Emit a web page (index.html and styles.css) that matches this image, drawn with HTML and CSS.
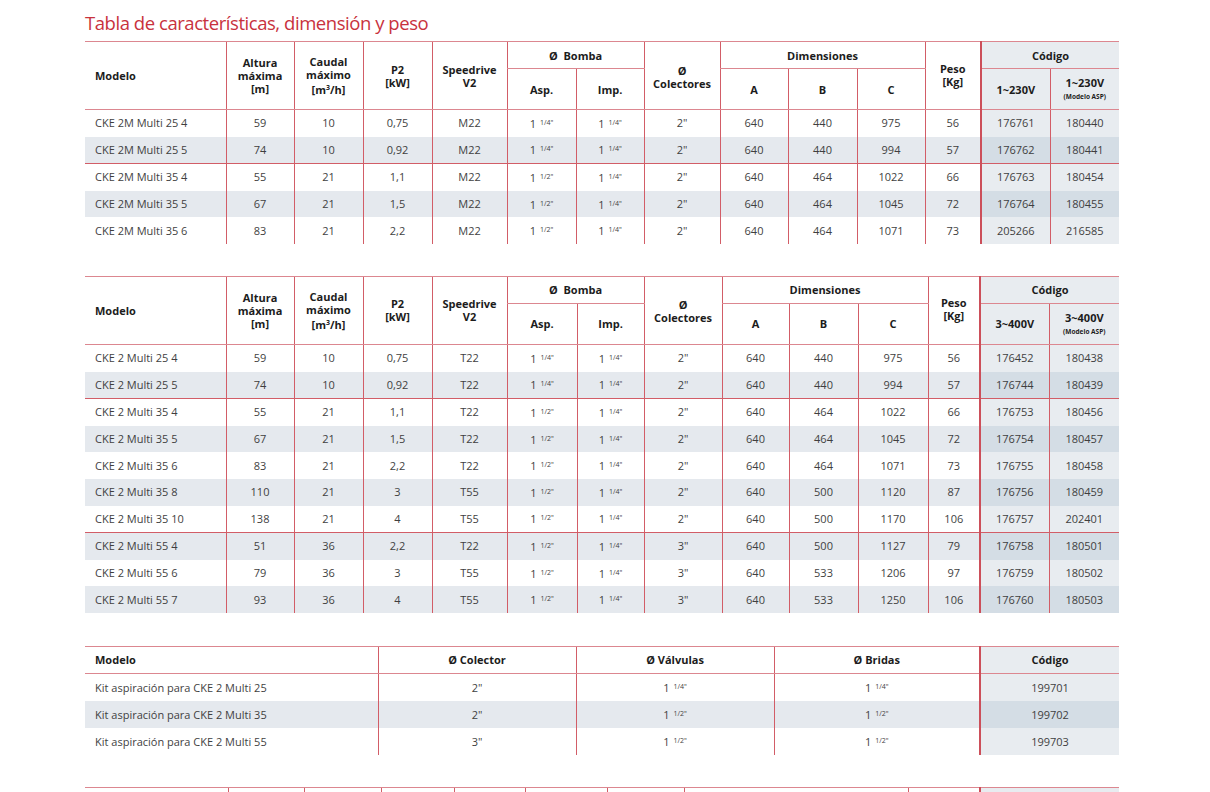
FILE: index.html
```html
<!DOCTYPE html>
<html lang="es">
<head>
<meta charset="utf-8">
<title>Tabla de características, dimensión y peso</title>
<link rel="stylesheet" href="styles.css">
</head>
<body>
<main class="page">
  <h1 class="title">Tabla de características, dimensión y peso</h1>

  <table class="spec t1">
    <colgroup>
      <col><col><col><col><col><col><col><col><col><col><col><col><col><col>
    </colgroup>
    <thead>
      <tr class="r1">
        <th rowspan="2" class="m">Modelo</th>
        <th rowspan="2">Altura<br>máxima<br>[m]</th>
        <th rowspan="2">Caudal<br>máximo<br><span class="unit">[m<sup>3</sup>/h]</span></th>
        <th rowspan="2">P2<br>[kW]</th>
        <th rowspan="2">Speedrive<br>V2</th>
        <th colspan="2">Ø&nbsp;&nbsp;Bomba</th>
        <th rowspan="2" class="col">Ø<br>Colectores</th>
        <th colspan="3">Dimensiones</th>
        <th rowspan="2" class="peso">Peso<br>[Kg]</th>
        <th colspan="2" class="code first">Código</th>
      </tr>
      <tr class="r2">
        <th>Asp.</th>
        <th>Imp.</th>
        <th>A</th>
        <th>B</th>
        <th>C</th>
        <th class="code first">1~230V</th>
        <th class="code asp">1~230V<small>(Modelo ASP)</small></th>
      </tr>
    </thead>
    <tbody>
      <tr>
        <td class="m">CKE 2M Multi 25 4</td><td>59</td><td>10</td><td>0,75</td><td>M22</td>
        <td>1 <span class="fr">1/4"</span></td><td>1 <span class="fr">1/4"</span></td><td>2"</td>
        <td>640</td><td>440</td><td>975</td><td>56</td><td class="code first">176761</td><td class="code">180440</td>
      </tr>
      <tr class="alt">
        <td class="m">CKE 2M Multi 25 5</td><td>74</td><td>10</td><td>0,92</td><td>M22</td>
        <td>1 <span class="fr">1/4"</span></td><td>1 <span class="fr">1/4"</span></td><td>2"</td>
        <td>640</td><td>440</td><td>994</td><td>57</td><td class="code first">176762</td><td class="code">180441</td>
      </tr>
      <tr class="grp">
        <td class="m">CKE 2M Multi 35 4</td><td>55</td><td>21</td><td>1,1</td><td>M22</td>
        <td>1 <span class="fr">1/2"</span></td><td>1 <span class="fr">1/4"</span></td><td>2"</td>
        <td>640</td><td>464</td><td>1022</td><td>66</td><td class="code first">176763</td><td class="code">180454</td>
      </tr>
      <tr class="alt">
        <td class="m">CKE 2M Multi 35 5</td><td>67</td><td>21</td><td>1,5</td><td>M22</td>
        <td>1 <span class="fr">1/2"</span></td><td>1 <span class="fr">1/4"</span></td><td>2"</td>
        <td>640</td><td>464</td><td>1045</td><td>72</td><td class="code first">176764</td><td class="code">180455</td>
      </tr>
      <tr>
        <td class="m">CKE 2M Multi 35 6</td><td>83</td><td>21</td><td>2,2</td><td>M22</td>
        <td>1 <span class="fr">1/2"</span></td><td>1 <span class="fr">1/4"</span></td><td>2"</td>
        <td>640</td><td>464</td><td>1071</td><td>73</td><td class="code first">205266</td><td class="code">216585</td>
      </tr>
    </tbody>
  </table>

  <table class="spec t2">
    <colgroup>
      <col><col><col><col><col><col><col><col><col><col><col><col><col><col>
    </colgroup>
    <thead>
      <tr class="r1">
        <th rowspan="2" class="m">Modelo</th>
        <th rowspan="2">Altura<br>máxima<br>[m]</th>
        <th rowspan="2">Caudal<br>máximo<br><span class="unit">[m<sup>3</sup>/h]</span></th>
        <th rowspan="2">P2<br>[kW]</th>
        <th rowspan="2">Speedrive<br>V2</th>
        <th colspan="2">Ø&nbsp;&nbsp;Bomba</th>
        <th rowspan="2" class="col">Ø<br>Colectores</th>
        <th colspan="3">Dimensiones</th>
        <th rowspan="2" class="peso">Peso<br>[Kg]</th>
        <th colspan="2" class="code first">Código</th>
      </tr>
      <tr class="r2">
        <th>Asp.</th>
        <th>Imp.</th>
        <th>A</th>
        <th>B</th>
        <th>C</th>
        <th class="code first">3~400V</th>
        <th class="code asp">3~400V<small>(Modelo ASP)</small></th>
      </tr>
    </thead>
    <tbody>
      <tr>
        <td class="m">CKE 2 Multi 25 4</td><td>59</td><td>10</td><td>0,75</td><td>T22</td>
        <td>1 <span class="fr">1/4"</span></td><td>1 <span class="fr">1/4"</span></td><td>2"</td>
        <td>640</td><td>440</td><td>975</td><td>56</td><td class="code first">176452</td><td class="code">180438</td>
      </tr>
      <tr class="alt">
        <td class="m">CKE 2 Multi 25 5</td><td>74</td><td>10</td><td>0,92</td><td>T22</td>
        <td>1 <span class="fr">1/4"</span></td><td>1 <span class="fr">1/4"</span></td><td>2"</td>
        <td>640</td><td>440</td><td>994</td><td>57</td><td class="code first">176744</td><td class="code">180439</td>
      </tr>
      <tr class="grp">
        <td class="m">CKE 2 Multi 35 4</td><td>55</td><td>21</td><td>1,1</td><td>T22</td>
        <td>1 <span class="fr">1/2"</span></td><td>1 <span class="fr">1/4"</span></td><td>2"</td>
        <td>640</td><td>464</td><td>1022</td><td>66</td><td class="code first">176753</td><td class="code">180456</td>
      </tr>
      <tr class="alt">
        <td class="m">CKE 2 Multi 35 5</td><td>67</td><td>21</td><td>1,5</td><td>T22</td>
        <td>1 <span class="fr">1/2"</span></td><td>1 <span class="fr">1/4"</span></td><td>2"</td>
        <td>640</td><td>464</td><td>1045</td><td>72</td><td class="code first">176754</td><td class="code">180457</td>
      </tr>
      <tr>
        <td class="m">CKE 2 Multi 35 6</td><td>83</td><td>21</td><td>2,2</td><td>T22</td>
        <td>1 <span class="fr">1/2"</span></td><td>1 <span class="fr">1/4"</span></td><td>2"</td>
        <td>640</td><td>464</td><td>1071</td><td>73</td><td class="code first">176755</td><td class="code">180458</td>
      </tr>
      <tr class="alt">
        <td class="m">CKE 2 Multi 35 8</td><td>110</td><td>21</td><td>3</td><td>T55</td>
        <td>1 <span class="fr">1/2"</span></td><td>1 <span class="fr">1/4"</span></td><td>2"</td>
        <td>640</td><td>500</td><td>1120</td><td>87</td><td class="code first">176756</td><td class="code">180459</td>
      </tr>
      <tr>
        <td class="m">CKE 2 Multi 35 10</td><td>138</td><td>21</td><td>4</td><td>T55</td>
        <td>1 <span class="fr">1/2"</span></td><td>1 <span class="fr">1/4"</span></td><td>2"</td>
        <td>640</td><td>500</td><td>1170</td><td>106</td><td class="code first">176757</td><td class="code">202401</td>
      </tr>
      <tr class="alt grp">
        <td class="m">CKE 2 Multi 55 4</td><td>51</td><td>36</td><td>2,2</td><td>T22</td>
        <td>1 <span class="fr">1/2"</span></td><td>1 <span class="fr">1/4"</span></td><td>3"</td>
        <td>640</td><td>500</td><td>1127</td><td>79</td><td class="code first">176758</td><td class="code">180501</td>
      </tr>
      <tr>
        <td class="m">CKE 2 Multi 55 6</td><td>79</td><td>36</td><td>3</td><td>T55</td>
        <td>1 <span class="fr">1/2"</span></td><td>1 <span class="fr">1/4"</span></td><td>3"</td>
        <td>640</td><td>533</td><td>1206</td><td>97</td><td class="code first">176759</td><td class="code">180502</td>
      </tr>
      <tr class="alt">
        <td class="m">CKE 2 Multi 55 7</td><td>93</td><td>36</td><td>4</td><td>T55</td>
        <td>1 <span class="fr">1/2"</span></td><td>1 <span class="fr">1/4"</span></td><td>3"</td>
        <td>640</td><td>533</td><td>1250</td><td>106</td><td class="code first">176760</td><td class="code">180503</td>
      </tr>
    </tbody>
  </table>

  <table class="spec t3">
    <colgroup>
      <col><col><col><col><col>
    </colgroup>
    <thead>
      <tr class="r0">
        <th class="m">Modelo</th>
        <th>Ø Colector</th>
        <th>Ø Válvulas</th>
        <th>Ø Bridas</th>
        <th class="code first">Código</th>
      </tr>
    </thead>
    <tbody>
      <tr>
        <td class="m">Kit aspiración para CKE 2 Multi 25</td><td>2"</td>
        <td>1 <span class="fr">1/4"</span></td><td>1 <span class="fr">1/4"</span></td><td class="code first">199701</td>
      </tr>
      <tr class="alt">
        <td class="m">Kit aspiración para CKE 2 Multi 35</td><td>2"</td>
        <td>1 <span class="fr">1/2"</span></td><td>1 <span class="fr">1/2"</span></td><td class="code first">199702</td>
      </tr>
      <tr>
        <td class="m">Kit aspiración para CKE 2 Multi 55</td><td>3"</td>
        <td>1 <span class="fr">1/2"</span></td><td>1 <span class="fr">1/2"</span></td><td class="code first">199703</td>
      </tr>
    </tbody>
  </table>

  <table class="spec t4">
    <colgroup>
      <col><col><col><col><col><col><col><col><col><col>
    </colgroup>
    <thead>
      <tr class="r0">
        <th class="m"></th><th></th><th></th><th></th><th></th><th></th><th></th><th></th><th></th>
        <th class="code first"></th>
      </tr>
    </thead>
  </table>
</main>
</body>
</html>
```

FILE: styles.css
```css
html, body {
  margin: 0;
  padding: 0;
  background: #ffffff;
}

body {
  font-family: "Open Sans", "Noto Sans", "Liberation Sans", sans-serif;
  color: #3b3b3b;
  overflow: hidden;
}

.page {
  width: 1034px;
  padding: 0 0 0 85px;
}

.title {
  margin: 0;
  padding-top: 11px;
  height: 41px;
  box-sizing: border-box;
  font-size: 18.5px;
  line-height: 24px;
  font-weight: 400;
  letter-spacing: -0.45px;
  color: #c8323d;
}

.spec {
  width: 1034px;
  border-collapse: collapse;
  table-layout: fixed;
  font-size: 11px;
  margin-bottom: 32px;
}

.spec.t2 { margin-bottom: 33px; }

.spec th,
.spec td {
  padding: 0;
  text-align: center;
  vertical-align: middle;
  border-left: 1px solid #d25d67;
  white-space: nowrap;
}

.spec .m {
  border-left: none;
  text-align: left;
  padding-left: 10px;
}

.spec th {
  font-weight: 700;
  color: #1c1c1c;
  line-height: 13px;
  border-bottom: 1px solid #dc8790;
}

.spec thead tr:first-child th {
  border-top: 1px solid #dc8790;
}

.spec .r0 th { height: 26px; }
.spec .r1 th { height: 26px; }
.spec .r2 th { height: 40px; }

.spec td {
  height: 26.6px;
  color: #3f3f3f;
  line-height: 14px;
}

.spec.t3 td { height: 27.2px; }

.spec tr.alt td { background: #e5e9ee; }
.spec tr.grp td { border-top: 1px solid #d25d67; }

.spec .code { background: #e8ecf0; }
.spec tr.alt td.code { background: #d4dde5; }
.spec .first { border-left: 2px solid #cc4f5a; }

.spec .unit {
  display: inline-block;
  padding-top: 2px;
}

.spec sup {
  font-size: 7px;
  line-height: 0;
  vertical-align: 4px;
}

.spec .fr {
  font-size: 7px;
  vertical-align: 3px;
  margin-left: 1px;
}

.spec .asp small {
  display: block;
  font-size: 6.5px;
  line-height: 10px;
  margin-top: 3px;
}

.spec .col { padding-top: 2px; }
.spec .peso { padding-bottom: 2px; }

/* column widths: table 1 */
.t1 col:nth-child(1)  { width: 141px; }
.t1 col:nth-child(2)  { width: 68px; }
.t1 col:nth-child(3)  { width: 69px; }
.t1 col:nth-child(4)  { width: 69px; }
.t1 col:nth-child(5)  { width: 75px; }
.t1 col:nth-child(6)  { width: 69px; }
.t1 col:nth-child(7)  { width: 68px; }
.t1 col:nth-child(8)  { width: 76px; }
.t1 col:nth-child(9)  { width: 68px; }
.t1 col:nth-child(10) { width: 69px; }
.t1 col:nth-child(11) { width: 68px; }
.t1 col:nth-child(12) { width: 56px; }
.t1 col:nth-child(13) { width: 69px; }
.t1 col:nth-child(14) { width: 69px; }

/* column widths: table 2 */
.t2 col:nth-child(1)  { width: 141px; }
.t2 col:nth-child(2)  { width: 68px; }
.t2 col:nth-child(3)  { width: 69px; }
.t2 col:nth-child(4)  { width: 69px; }
.t2 col:nth-child(5)  { width: 75px; }
.t2 col:nth-child(6)  { width: 70px; }
.t2 col:nth-child(7)  { width: 67px; }
.t2 col:nth-child(8)  { width: 78px; }
.t2 col:nth-child(9)  { width: 67px; }
.t2 col:nth-child(10) { width: 69px; }
.t2 col:nth-child(11) { width: 70px; }
.t2 col:nth-child(12) { width: 52px; }
.t2 col:nth-child(13) { width: 69px; }
.t2 col:nth-child(14) { width: 70px; }

/* column widths: table 3 */
.t3 col:nth-child(1) { width: 293px; }
.t3 col:nth-child(2) { width: 198px; }
.t3 col:nth-child(3) { width: 198px; }
.t3 col:nth-child(4) { width: 206px; }
.t3 col:nth-child(5) { width: 139px; }

/* column widths: table 4 */
.t4 col:nth-child(1)  { width: 143px; }
.t4 col:nth-child(2)  { width: 76px; }
.t4 col:nth-child(3)  { width: 77px; }
.t4 col:nth-child(4)  { width: 73px; }
.t4 col:nth-child(5)  { width: 71px; }
.t4 col:nth-child(6)  { width: 82px; }
.t4 col:nth-child(7)  { width: 77px; }
.t4 col:nth-child(8)  { width: 224px; }
.t4 col:nth-child(9)  { width: 72px; }
.t4 col:nth-child(10) { width: 139px; }
```
